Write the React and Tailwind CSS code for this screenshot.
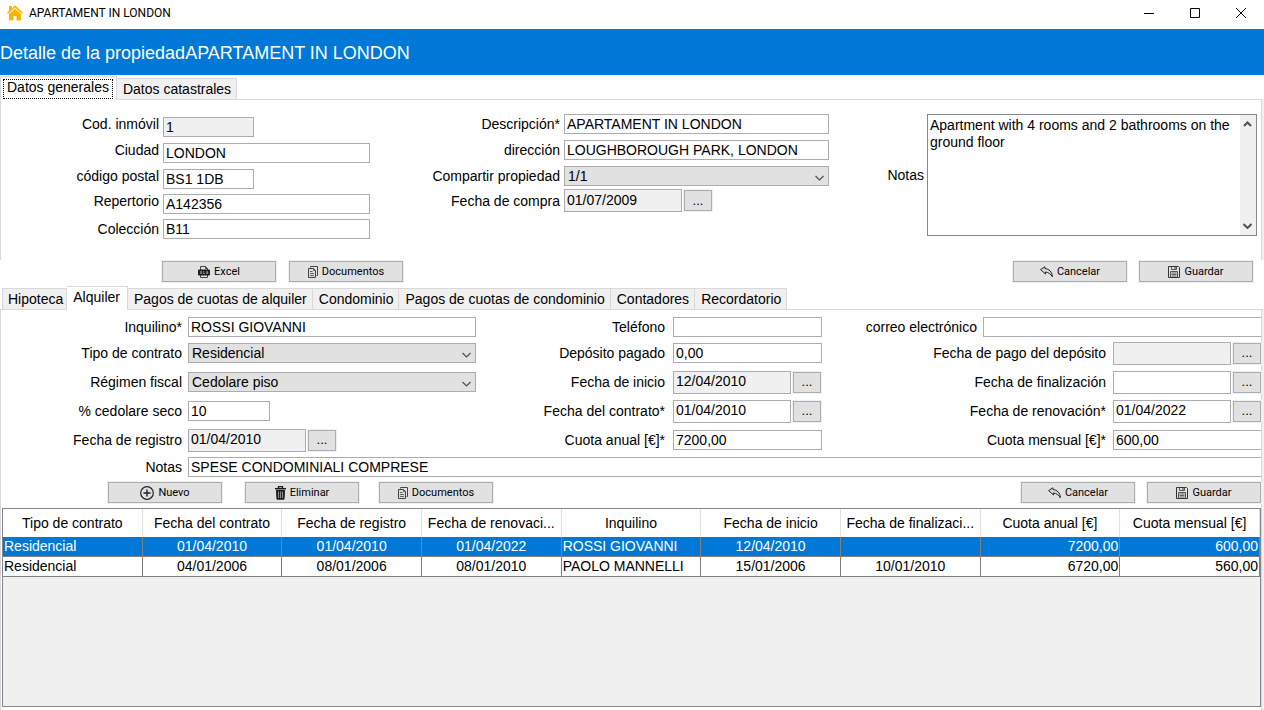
import { useState } from "react";
import clsx from "clsx";

const leases = [
  {
    type: "Residencial",
    contract: "01/04/2010",
    registered: "01/04/2010",
    renewal: "01/04/2022",
    tenant: "ROSSI GIOVANNI",
    start: "12/04/2010",
    end: "",
    yearly: "7200,00",
    monthly: "600,00",
  },
  {
    type: "Residencial",
    contract: "04/01/2006",
    registered: "08/01/2006",
    renewal: "08/01/2010",
    tenant: "PAOLO MANNELLI",
    start: "15/01/2006",
    end: "10/01/2010",
    yearly: "6720,00",
    monthly: "560,00",
  },
];

const columns = [
  { key: "type", title: "Tipo de contrato", align: "text-left" },
  { key: "contract", title: "Fecha del contrato", align: "text-center" },
  { key: "registered", title: "Fecha de registro", align: "text-center" },
  { key: "renewal", title: "Fecha de renovaci...", align: "text-center" },
  { key: "tenant", title: "Inquilino", align: "text-left" },
  { key: "start", title: "Fecha de inicio", align: "text-center" },
  { key: "end", title: "Fecha de finalizaci...", align: "text-center" },
  { key: "yearly", title: "Cuota anual [€]", align: "text-right" },
  { key: "monthly", title: "Cuota mensual [€]", align: "text-right" },
];

const HomeIcon = () => (
  <svg width="16" height="16" viewBox="0 0 16 16" fill="#fdb400">
    <path d="M2 1h3v2.300L8 .3l8 7.500-1 1.200L8 2.600 1 9 0 7.800l2-2z" />
    <path d="M2 9.300 8 3.700l6 5.600V15.500H9.500V11h-3v4.500H2z" />
  </svg>
);

const ExcelIcon = () => (
  <svg width="12" height="12" viewBox="0 0 12 12" fill="none" stroke="#444">
    <path d="M2.500 4V.5h5l2 2V4M7.500.5v2h2M2.500 9v2.500h7V9" />
    <path d="M.5 4h11v5H.5z" fill="#1c1c1c" stroke="#1c1c1c" />
    <path d="M2 5l2 3M4 5 2 8M5.500 5v2.500H7M10 5.500H8.500v1H10v1H8" stroke="#aaa" strokeWidth=".7" />
  </svg>
);

const DocsIcon = () => (
  <svg width="10" height="12" viewBox="0 0 10 12" fill="none" stroke="#444">
    <path d="M2.500 1.500v-1h7v9h-1" />
    <path d="M.5 2.500h5l2 2v7h-7z" fill="#ddd" />
    <path d="M5.500 2.500v2h2M2 5.500h2.500M2 7.500h4M2 9.500h4" stroke="#555" strokeWidth=".9" />
  </svg>
);

const UndoIcon = () => (
  <svg width="13" height="12" viewBox="0 0 13 12" fill="#d8d8d8" stroke="#222" strokeLinejoin="round">
    <path d="M.6 3.600 4.800.8l.2 1.800c4 .2 7 3 7.400 8.200C10.800 8 8.500 6.400 5.300 6l.2 2z" />
  </svg>
);

const SaveIcon = () => (
  <svg width="12" height="12" viewBox="0 0 12 12" fill="none" stroke="#333">
    <path d="M.5.5h10l1 1v10H.5z" />
    <path d="M3.500.5v3h5v-3" stroke="#555" />
    <path d="M7 1v2" />
    <path d="M2.500 11.500v-6h7v6" stroke="#555" />
    <path d="M3.500 7h5M3.500 8.500h5M3.500 10h5" stroke="#555" strokeWidth=".9" />
  </svg>
);

const AddIcon = () => (
  <svg width="14" height="14" viewBox="0 0 14 14" fill="none" stroke="#222">
    <circle cx="7" cy="7" r="6.300" strokeWidth="1.200" />
    <path d="M7 3.500v7M3.500 7h7" strokeWidth="1.400" />
  </svg>
);

const TrashIcon = () => (
  <svg width="11" height="14" viewBox="0 0 11 14" fill="none" stroke="#1c1c1c">
    <path d="M3.500 2V.6h4V2M0 2.700h11" strokeWidth="1.400" />
    <path d="M1.500 4.500h8l-.5 8.700H2z" fill="#222" />
    <path d="M3.500 5.500v6.500M5.500 5.500v6.500M7.500 5.500v6.500" stroke="#aaa" strokeWidth=".8" />
  </svg>
);

const Chevron = ({ up, bold }) => (
  <svg width="9" height="6" viewBox="0 0 9 6" fill="none" stroke="#505050" strokeWidth={bold ? 2 : 1.2}>
    <path d={up ? "M1 5l3.500-3.500L8 5" : "M.5 1l4 4 4-4"} />
  </svg>
);

const Field = ({ id, value = "", width = "w-full", disabled, open }) => (
  <input
    id={id}
    defaultValue={value}
    readOnly={disabled}
    className={clsx(
      "h-5 min-w-0 border border-[#abadb3] px-0.5 outline-none",
      width,
      disabled ? "bg-[#f0f0f0]" : "bg-white",
      open && "border-r-0"
    )}
  />
);

const Select = ({ id, options, width }) => (
  <div className={clsx("relative", width)}>
    <select
      id={id}
      className="block h-5 w-full appearance-none border border-[#adadad] bg-[#e1e1e1] px-[3px] leading-[18px] outline-none"
    >
      {options.map((o) => (
        <option key={o}>{o}</option>
      ))}
    </select>
    <span className="pointer-events-none absolute top-[9px] right-[5px]">
      <Chevron />
    </span>
  </div>
);

const DateField = ({ id, value = "", disabled }) => (
  <div className="flex items-start gap-0.5">
    <input
      id={id}
      defaultValue={value}
      readOnly={disabled}
      className={clsx(
        "h-[23px] w-[118px] border border-[#abadb3] px-0.5 pb-0.5 outline-none",
        disabled ? "bg-[#f0f0f0]" : "bg-white"
      )}
    />
    <button
      type="button"
      aria-label="Elegir fecha"
      className="mt-px h-[21px] w-7 border border-[#adadad] bg-[#e1e1e1] text-[13px] leading-[18px] ring-1 ring-[#f0f0f0]"
    >
      ...
    </button>
  </div>
);

const Row = ({ id, label, labelWidth = "flex-1", gap = "gap-1", className = "items-center", children }) => (
  <div className={clsx("flex", gap, className)}>
    <label htmlFor={id} className={clsx("text-right leading-5 whitespace-nowrap", labelWidth)}>
      {label}
    </label>
    {children}
  </div>
);

const ToolButton = ({ icon, children }) => (
  <button
    type="button"
    className="flex h-[21px] w-[114px] items-center justify-center gap-1 border border-[#adadad] bg-[#e1e1e1] font-['Roboto',sans-serif] text-[11px] leading-4 ring-1 ring-[#f0f0f0]"
  >
    {icon}
    {children}
  </button>
);

const Tabs = ({ names, active, onChange, focused }) => (
  <div role="tablist" className="relative z-10 flex items-end">
    {names.map((name, i) => (
      <button
        key={name}
        type="button"
        role="tab"
        aria-selected={active === name}
        onClick={() => onChange(name)}
        className={clsx(
          "border border-b-0 border-[#d9d9d9] whitespace-nowrap",
          active === name
            ? "-mb-px h-6 bg-white pr-[7px] pl-1.5"
            : "h-[21px] bg-[#f0f0f0] pr-[5px] pl-1.5 first:pr-[3px] first:pl-[5px]",
          i > 0 && "border-l-0"
        )}
      >
        {active === name ? (
          <span
            className={clsx(
              "-mx-1 block h-5 px-1 leading-[17px]",
              focused && "outline-1 -outline-offset-1 outline-black outline-dotted"
            )}
          >
            {name}
          </span>
        ) : (
          name
        )}
      </button>
    ))}
  </div>
);

const LeaseTable = () => {
  const [selected, setSelected] = useState(0);

  return (
    <div className="mb-[3px] ml-px flex-1 border border-[#828790] bg-[#f0f0f0]">
      <table className="w-full table-fixed border-separate border-spacing-0">
        <thead>
          <tr className="h-7 bg-white">
            {columns.map((c) => (
              <th key={c.key} className="border-r border-[#e0e0e0] p-0 font-normal whitespace-nowrap">
                {c.title}
              </th>
            ))}
          </tr>
        </thead>
        <tbody>
          {leases.map((lease, i) => (
            <tr
              key={lease.contract}
              onClick={() => setSelected(i)}
              className={clsx("h-5", selected === i ? "bg-[#0078d7] text-white" : "bg-white")}
            >
              {columns.map((c) => (
                <td
                  key={c.key}
                  className={clsx("h-5 border-r border-b border-[#808080] px-px py-0 leading-[19px]", c.align)}
                >
                  {lease[c.key]}
                </td>
              ))}
            </tr>
          ))}
        </tbody>
      </table>
    </div>
  );
};

const App = () => {
  const [tab, setTab] = useState("Datos generales");
  const [section, setSection] = useState("Alquiler");

  return (
    <div className="flex min-h-screen flex-col bg-white font-['Liberation_Sans',Arial,sans-serif] text-[14px] leading-5 text-black">
      <header>
        <div className="flex h-[29px] items-center justify-between pb-[3px] pl-[7px]">
          <div className="flex items-center gap-1.5 font-['Roboto',sans-serif] text-[12px] leading-4">
            <HomeIcon />
            APARTAMENT IN LONDON
          </div>
          <div className="flex">
            <button type="button" aria-label="Minimizar" className="flex h-[26px] w-[46px] items-center justify-center">
              <svg width="10" height="10" stroke="#000"><path d="M0 5.500h10" /></svg>
            </button>
            <button type="button" aria-label="Maximizar" className="flex h-[26px] w-[46px] items-center justify-center">
              <svg width="10" height="10" stroke="#000" fill="none"><path d="M.5.5h9v9h-9z" /></svg>
            </button>
            <button type="button" aria-label="Cerrar" className="flex h-[26px] w-[46px] items-center justify-center">
              <svg width="10" height="10" stroke="#000"><path d="M0 0l10 10M10 0 0 10" /></svg>
            </button>
          </div>
        </div>
        <h1 className="flex h-[46px] items-center bg-[#0078d7] pt-px text-[18px] text-white">
          Detalle de la propiedadAPARTAMENT IN LONDON
        </h1>
      </header>

      <div className="pt-px">
        <Tabs names={["Datos generales", "Datos catastrales"]} active={tab} onChange={setTab} focused />
      </div>
      <div className="bg-[#f0f0f0] pr-0.5">
        <section className="grid grid-cols-[369px_459px_1fr] border-x border-t border-[#d9d9d9] bg-white pt-[11px] pr-1 pb-[21px]">
          <div className="grid grid-rows-[26px_26px_25px_28px_20px] pt-[3px]">
            <Row id="cod" label="Cod. inmóvil" className="items-start">
              <div className="w-[207px] pt-[3px]"><Field id="cod" value="1" width="w-[91px]" disabled /></div>
            </Row>
            <Row id="ciudad" label="Ciudad" className="items-start">
              <div className="w-[207px] pt-[3px]"><Field id="ciudad" value="LONDON" /></div>
            </Row>
            <Row id="cp" label="código postal" className="items-start">
              <div className="w-[207px] pt-[3px]"><Field id="cp" value="BS1 1DB" width="w-[91px]" /></div>
            </Row>
            <Row id="repertorio" label="Repertorio" className="items-start">
              <div className="w-[207px] pt-[3px]"><Field id="repertorio" value="A142356" /></div>
            </Row>
            <Row id="coleccion" label="Colección">
              <Field id="coleccion" value="B11" width="w-[207px]" />
            </Row>
          </div>

          <div className="grid grid-rows-[26px_26px_26px_23px]">
            <Row id="descripcion" label="Descripción*">
              <Field id="descripcion" value="APARTAMENT IN LONDON" width="w-[265px]" />
            </Row>
            <Row id="direccion" label="dirección">
              <Field id="direccion" value="LOUGHBOROUGH PARK, LONDON" width="w-[265px]" />
            </Row>
            <Row id="compartir" label="Compartir propiedad">
              <Select id="compartir" options={["1/1"]} width="w-[265px]" />
            </Row>
            <Row id="compra" label="Fecha de compra">
              <div className="w-[265px]"><DateField id="compra" value="01/07/2009" disabled /></div>
            </Row>
          </div>

          <Row id="notas" label="Notas" labelWidth="w-[95px]" gap="gap-[3px]">
            <div className="mt-[3px] flex h-[122px] flex-1 self-start border border-[#828790]">
              <textarea
                id="notas"
                className="min-w-0 flex-1 resize-none overflow-hidden px-0.5 py-0.5 leading-[17px] outline-none"
                defaultValue="Apartment with 4 rooms and 2 bathrooms on the ground floor"
              />
              <div className="flex w-4 flex-col items-center justify-between bg-[#f0f0f0] py-1.5 pr-px">
                <Chevron up bold />
                <Chevron bold />
              </div>
            </div>
          </Row>
        </section>
      </div>

      <div className="flex h-[26px] justify-between pt-px pr-[11px] pl-[162px]">
        <div className="flex gap-[13px]">
          <ToolButton icon={<ExcelIcon />}>Excel</ToolButton>
          <ToolButton icon={<DocsIcon />}>Documentos</ToolButton>
        </div>
        <div className="flex gap-3">
          <ToolButton icon={<UndoIcon />}>Cancelar</ToolButton>
          <ToolButton icon={<SaveIcon />}>Guardar</ToolButton>
        </div>
      </div>

      <div className="pl-0.5">
        <Tabs
          names={[
            "Hipoteca",
            "Alquiler",
            "Pagos de cuotas de alquiler",
            "Condominio",
            "Pagos de cuotas de condominio",
            "Contadores",
            "Recordatorio",
          ]}
          active={section}
          onChange={setSection}
        />
      </div>
      <div className="flex flex-1 bg-[#f0f0f0] pr-0.5">
        <section className="flex flex-1 flex-col border-x border-t border-[#d9d9d9] bg-white pt-1">
          <div className="grid grid-cols-[475px_346px_1fr]">
            <div className="grid grid-rows-[26px_26px_32px_26px_32px]">
              <Row id="inquilino" label="Inquilino*" gap="gap-1.5">
                <Field id="inquilino" value="ROSSI GIOVANNI" width="w-[288px]" />
              </Row>
              <Row id="tipo" label="Tipo de contrato" gap="gap-1.5">
                <Select id="tipo" options={["Residencial"]} width="w-[288px]" />
              </Row>
              <Row id="regimen" label="Régimen fiscal" gap="gap-1.5">
                <Select id="regimen" options={["Cedolare piso"]} width="w-[288px]" />
              </Row>
              <Row id="cedolare" label="% cedolare seco" gap="gap-1.5">
                <div className="flex w-[288px]"><Field id="cedolare" value="10" width="w-[82px]" /></div>
              </Row>
              <Row id="registro" label="Fecha de registro" gap="gap-1.5">
                <div className="w-[288px]"><DateField id="registro" value="01/04/2010" disabled /></div>
              </Row>
            </div>

            <div className="grid grid-rows-[26px_26px_32px_26px_32px]">
              <Row id="telefono" label="Teléfono" gap="gap-2">
                <Field id="telefono" width="w-[149px]" />
              </Row>
              <Row id="deposito" label="Depósito pagado" gap="gap-2">
                <Field id="deposito" value="0,00" width="w-[149px]" />
              </Row>
              <Row id="inicio" label="Fecha de inicio" gap="gap-2">
                <div className="w-[149px]"><DateField id="inicio" value="12/04/2010" disabled /></div>
              </Row>
              <Row id="contrato" label="Fecha del contrato*" gap="gap-2">
                <div className="w-[149px]"><DateField id="contrato" value="01/04/2010" /></div>
              </Row>
              <Row id="anual" label="Cuota anual [€]*" gap="gap-2">
                <Field id="anual" value="7200,00" width="w-[149px]" />
              </Row>
            </div>

            <div className="grid grid-rows-[26px_26px_32px_26px_32px]">
              <Row id="correo" label="correo electrónico" gap="gap-1.5">
                <Field id="correo" width="w-[278px]" open />
              </Row>
              <Row id="pago" label="Fecha de pago del depósito" gap="gap-[7px]">
                <DateField id="pago" disabled />
              </Row>
              <Row id="fin" label="Fecha de finalización" gap="gap-[7px]">
                <DateField id="fin" />
              </Row>
              <Row id="renovacion" label="Fecha de renovación*" gap="gap-[7px]">
                <DateField id="renovacion" value="01/04/2022" />
              </Row>
              <Row id="mensual" label="Cuota mensual [€]*" gap="gap-[7px]">
                <Field id="mensual" value="600,00" width="w-[148px]" open />
              </Row>
            </div>
          </div>

          <Row id="notas-alquiler" label="Notas" labelWidth="w-[181px]" gap="gap-1.5" className="h-[22px] items-center">
            <Field id="notas-alquiler" value="SPESE CONDOMINIALI COMPRESE" width="flex-1" open />
          </Row>

          <div className="flex h-[30px] justify-between pt-1 pl-[107px]">
            <div className="flex gap-5">
              <div className="flex gap-[23px]">
                <ToolButton icon={<AddIcon />}>Nuevo</ToolButton>
                <ToolButton icon={<TrashIcon />}>Eliminar</ToolButton>
              </div>
              <ToolButton icon={<DocsIcon />}>Documentos</ToolButton>
            </div>
            <div className="flex gap-3">
              <ToolButton icon={<UndoIcon />}>Cancelar</ToolButton>
              <ToolButton icon={<SaveIcon />}>Guardar</ToolButton>
            </div>
          </div>

          <LeaseTable />
        </section>
      </div>
    </div>
  );
};

export default App;
